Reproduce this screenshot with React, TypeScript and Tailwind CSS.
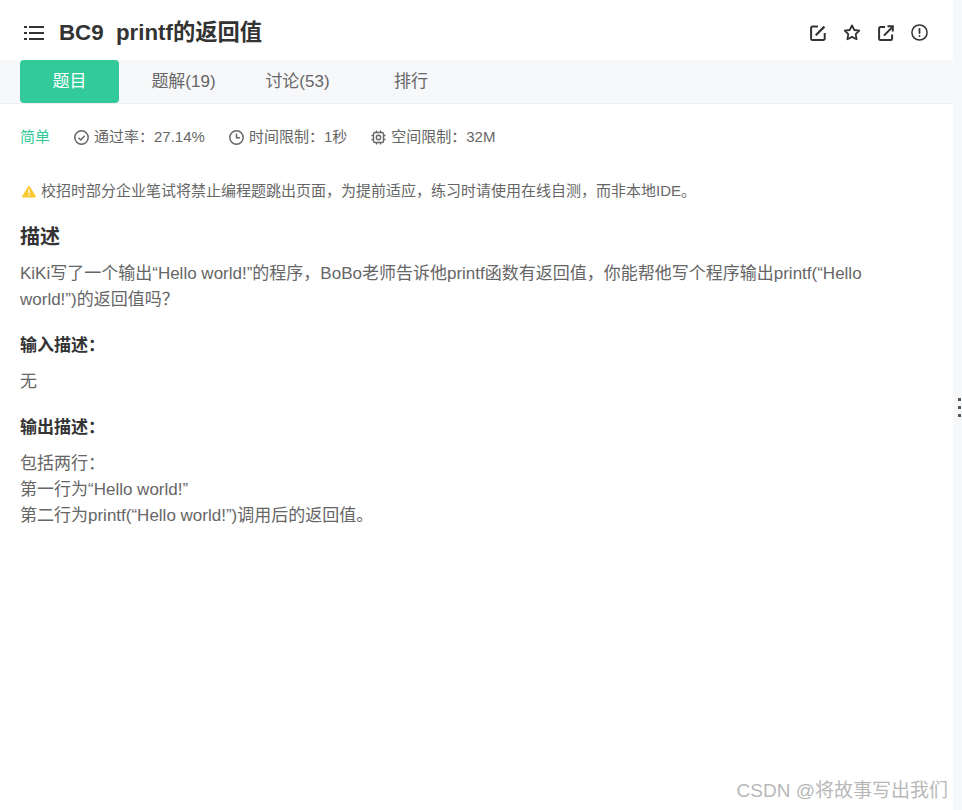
const font = { fontFamily: '"Liberation Sans", "Noto Sans CJK SC", sans-serif' };

function ListIcon() {
  return (
    <svg width="20" height="16" viewBox="0 0 20 16" className="text-[#333]">
      <rect x="0" y="1" width="3" height="2" fill="currentColor" />
      <rect x="5" y="1" width="15" height="2" fill="currentColor" />
      <rect x="0" y="7" width="3" height="2" fill="currentColor" />
      <rect x="5" y="7" width="15" height="2" fill="currentColor" />
      <rect x="0" y="13" width="3" height="2" fill="currentColor" />
      <rect x="5" y="13" width="15" height="2" fill="currentColor" />
    </svg>
  );
}

function EditIcon() {
  return (
    <svg width="16" height="16" viewBox="0 0 16 16" fill="none" stroke="#333" strokeWidth="2">
      <path d="M8 1.500H2.600A1.500 1.500 0 0 0 1.100 3v10.400a1.500 1.500 0 0 0 1.500 1.500h10.600a1.500 1.500 0 0 0 1.500-1.500V8" />
      <path d="M5.800 10.200 14.400 1.600" strokeWidth="2.200" />
    </svg>
  );
}

function StarIcon() {
  return (
    <svg width="18" height="17" viewBox="0 0 18 17" fill="none" stroke="#333" strokeWidth="1.800" strokeLinejoin="round">
      <path d="M9 1.400 11.300 6l5 .7-3.600 3.500.9 5L9 12.900l-4.600 2.300.9-5L1.700 6.700l5-.7Z" />
    </svg>
  );
}

function ShareIcon() {
  return (
    <svg width="16" height="16" viewBox="0 0 16 16" fill="none" stroke="#333" strokeWidth="2">
      <path d="M7 2H2.400A1.300 1.300 0 0 0 1.100 3.300v10.400a1.300 1.300 0 0 0 1.300 1.300h10.400a1.300 1.300 0 0 0 1.300-1.300V9.500" />
      <path d="M6 10.500 14.500 2" />
      <path d="M9.500 1.200h5.300v5.300" />
    </svg>
  );
}

function AlertIcon() {
  return (
    <svg width="17" height="17" viewBox="0 0 17 17" fill="none">
      <circle cx="8.500" cy="8.500" r="7.600" stroke="#333" strokeWidth="1.500" />
      <rect x="7.600" y="4" width="1.800" height="6" rx="0.900" fill="#333" />
      <rect x="7.600" y="11" width="1.800" height="1.900" rx="0.900" fill="#333" />
    </svg>
  );
}

function CheckCircle() {
  return (
    <svg width="15" height="15" viewBox="0 0 15 15" fill="none" stroke="#666" strokeWidth="1.500">
      <circle cx="7.500" cy="7.500" r="6.700" />
      <path d="M4.500 7.700 6.800 10l3.800-4.200" />
    </svg>
  );
}

function ClockIcon() {
  return (
    <svg width="15" height="15" viewBox="0 0 15 15" fill="none" stroke="#666" strokeWidth="1.500">
      <circle cx="7.500" cy="7.500" r="6.700" />
      <path d="M7.500 3.500v4.300h3.600" />
    </svg>
  );
}

function ChipIcon() {
  return (
    <svg width="15" height="15" viewBox="0 0 15 15" fill="none" stroke="#666">
      <rect x="2.500" y="2.500" width="10" height="10" rx="1.500" strokeWidth="1.400" />
      <circle cx="7.500" cy="7.500" r="2.200" strokeWidth="1.400" />
      <path d="M5.500.5v2M9.500.5v2M5.500 12.500v2M9.500 12.500v2M.5 5.500h2M.5 9.500h2M12.500 5.500h2M12.500 9.500h2" strokeWidth="1.300" />
    </svg>
  );
}

function WarnIcon() {
  return (
    <svg width="14" height="13" viewBox="0 0 15 13">
      <path d="M7.500.6a1 1 0 0 1 .9.5l6.300 10.300a1 1 0 0 1-.9 1.500H1.200a1 1 0 0 1-.9-1.500L6.600 1.100a1 1 0 0 1 .9-.5Z" fill="#f8c92e" />
      <rect x="6.800" y="4" width="1.400" height="4.500" fill="#fff" />
      <rect x="6.800" y="9.500" width="1.400" height="1.500" fill="#fff" />
    </svg>
  );
}

export default function App() {
  return (
    <div className="relative flex h-[810px] w-[962px] overflow-hidden bg-white" style={font}>
      <main className="w-[953px] shrink-0">
        {/* Title */}
        <header className="flex h-[60px] items-center pl-6 pr-[25px] pt-[5px]">
          <ListIcon />
          <h1 className="ml-[15px] flex-1 text-[22.3px] font-bold leading-[30px] text-[#333]">
            BC9&nbsp;&nbsp;printf的返回值
          </h1>
          <div className="flex items-center gap-[17px]">
            <EditIcon />
            <StarIcon />
            <ShareIcon />
            <AlertIcon />
          </div>
        </header>

        {/* Tabs */}
        <nav className="flex h-11 border-b border-[#eeeeee] bg-[#f7f8fa] pl-5 text-[17px] text-[#666]">
          <div className="flex h-[43px] w-[99px] items-center justify-center rounded-[4px] bg-[#32ca99] text-white">
            题目
          </div>
          <div className="flex w-[129px] items-center justify-center">题解(19)</div>
          <div className="-ml-[15px] flex w-[129px] items-center justify-center">讨论(53)</div>
          <div className="flex w-[98px] items-center justify-center">排行</div>
        </nav>

        <section className="px-5">
          {/* Meta */}
          <div className="mt-[23px] flex h-5 items-center text-[15px] text-[#666]">
            <span className="text-[#32ca99]">简单</span>
            <span className="ml-6 flex items-center gap-[5px]">
              <CheckCircle />
              通过率：27.14%
            </span>
            <span className="ml-6 flex items-center gap-[5px]">
              <ClockIcon />
              时间限制：1秒
            </span>
            <span className="ml-6 flex items-center gap-[5px]">
              <ChipIcon />
              空间限制：32M
            </span>
          </div>

          {/* Notice */}
          <div className="mt-[34px] flex h-5 items-center gap-[5px] pl-[2px] text-[15px] text-[#666]">
            <WarnIcon />
            校招时部分企业笔试将禁止编程题跳出页面，为提前适应，练习时请使用在线自测，而非本地IDE。
          </div>

          <h2 className="mt-[23px] text-xl font-bold leading-[26px] text-[#333]">描述</h2>
          <p className="mt-[11px] w-[900px] text-[17px] leading-[26px] text-[#666]">
            KiKi写了一个输出“Hello world!”的程序，BoBo老师告诉他printf函数有返回值，你能帮他写个程序输出printf(“Hello world!”)的返回值吗？
          </p>

          <h3 className="mt-[21px] text-[17px] font-bold leading-6 text-[#333]">输入描述：</h3>
          <p className="mt-[12px] text-[17px] leading-6 text-[#666]">无</p>

          <h3 className="mt-[22px] text-[17px] font-bold leading-6 text-[#333]">输出描述：</h3>
          <p className="mt-[11px] text-[17px] leading-[26px] text-[#666]">
            包括两行：
            <br />
            第一行为“Hello world!”
            <br />
            第二行为printf(“Hello world!”)调用后的返回值。
          </p>
        </section>
      </main>

      {/* Right strip */}
      <aside className="relative flex-1 bg-[#f7f8fa]">
        <div className="absolute left-[5px] top-[398px] flex flex-col gap-[5px]">
          <span className="h-[3px] w-[3px] bg-[#555]" />
          <span className="h-[3px] w-[3px] bg-[#555]" />
          <span className="h-[3px] w-[3px] bg-[#555]" />
        </div>
      </aside>

      <div className="absolute bottom-[5px] right-[14px] text-[19px] leading-7 text-[#b8b8b8]">CSDN @将故事写出我们</div>
    </div>
  );
}
